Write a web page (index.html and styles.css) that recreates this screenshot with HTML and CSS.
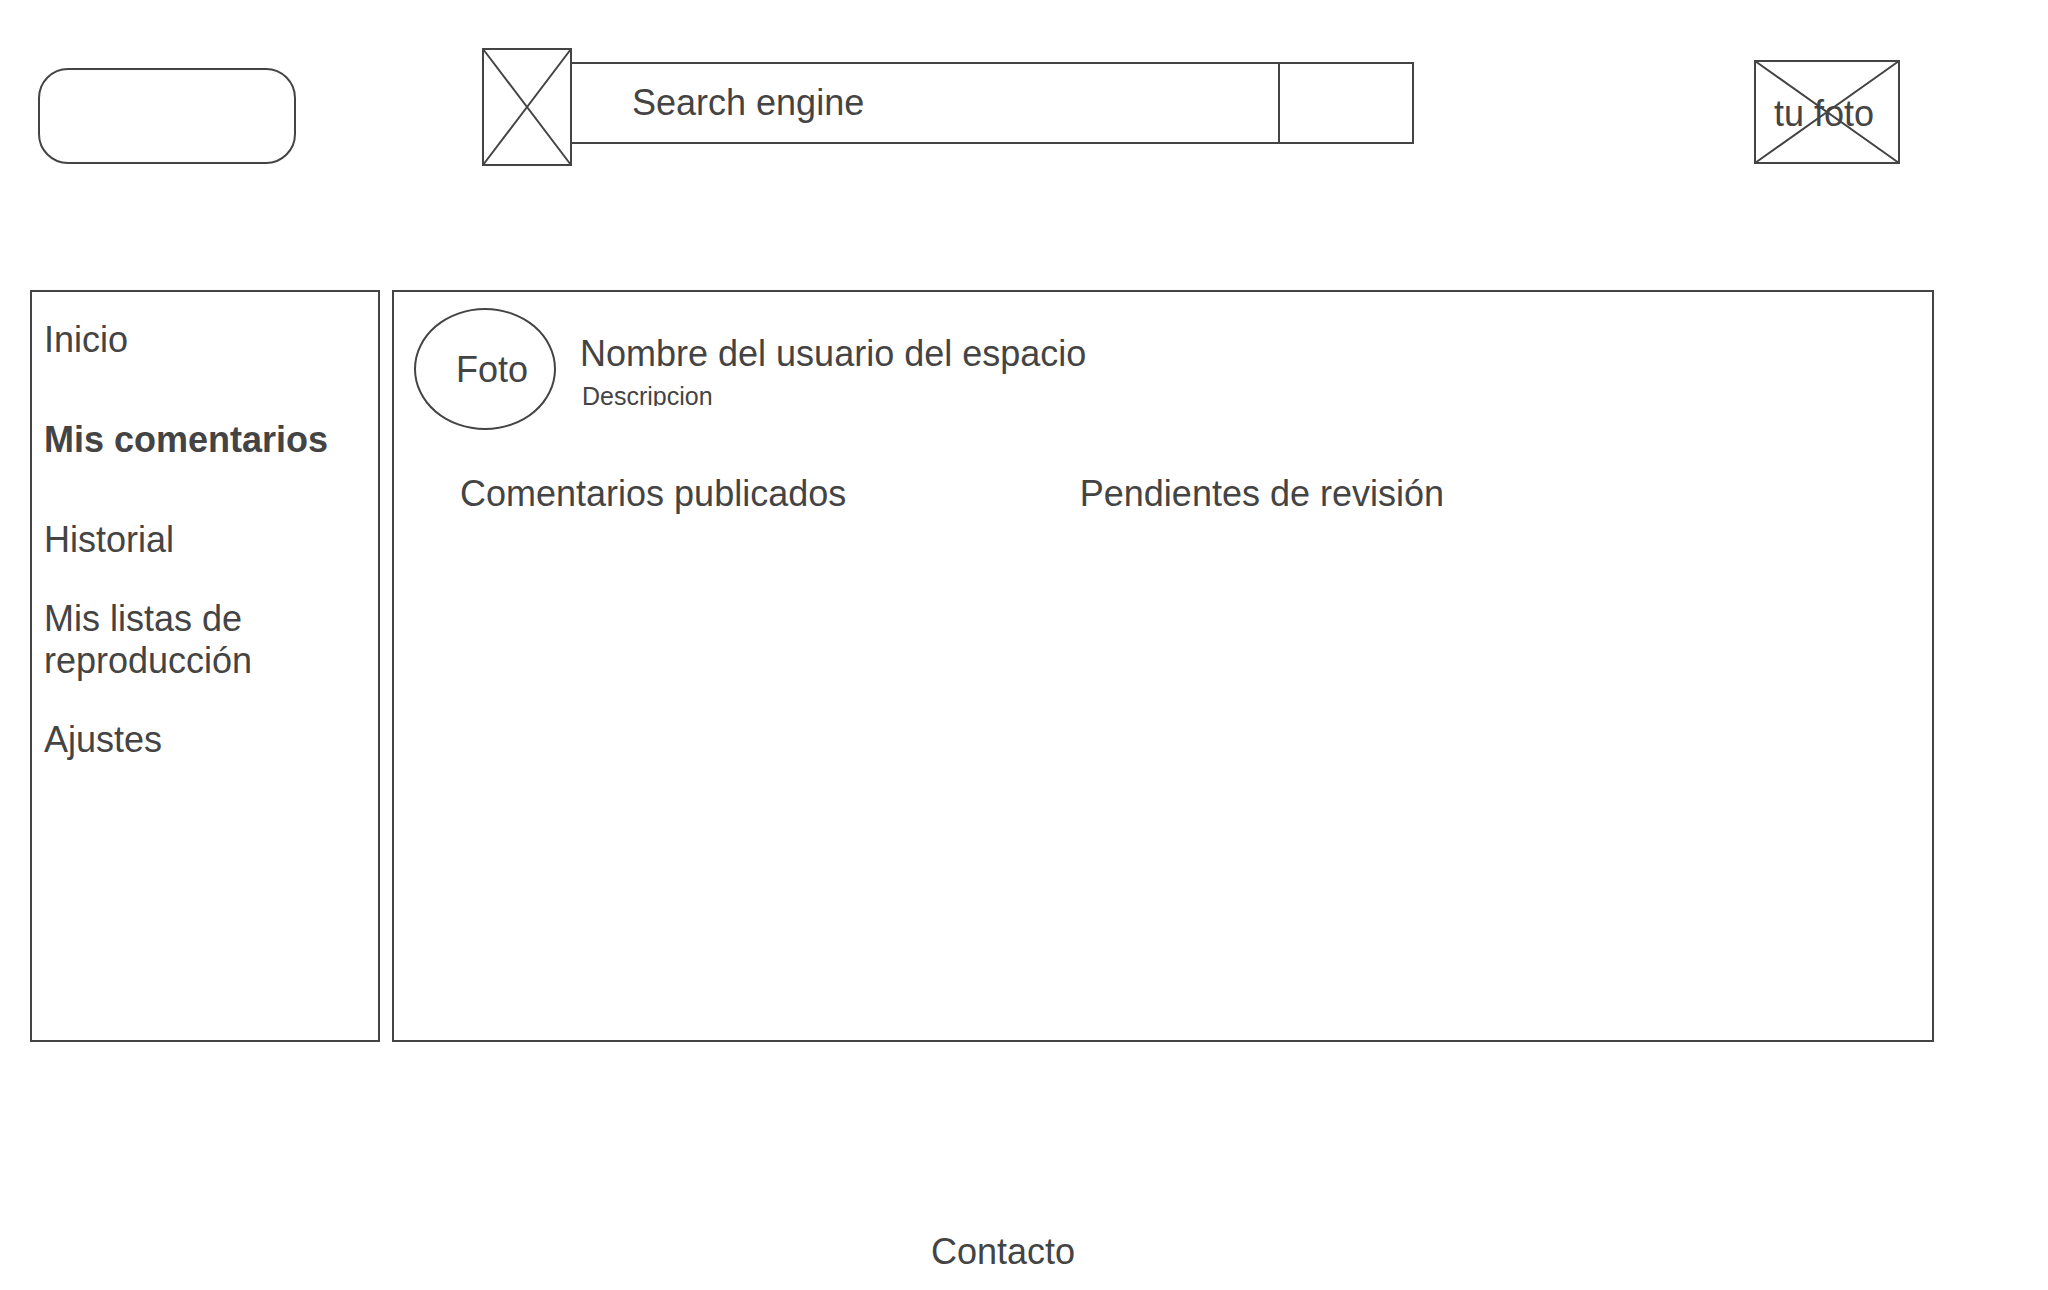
FILE: index.html
```html
<!DOCTYPE html>
<html lang="es">
<head>
<meta charset="utf-8">
<meta name="viewport" content="width=device-width, initial-scale=1">
<title>Mis comentarios</title>
<link rel="stylesheet" href="styles.css">
</head>
<body>
<header class="header">
  <a class="logo" href="#" aria-label="Inicio"></a>
  <form class="search" role="search">
    <svg class="search-image" viewBox="0 0 90 118" aria-hidden="true">
      <path d="M1 1H89V117H1ZM1 1L89 117M89 1L1 117"/>
    </svg>
    <input class="search-input" type="search" placeholder="Search engine" aria-label="Search engine">
    <button class="search-button" type="submit" aria-label="Buscar"></button>
  </form>
  <a class="account" href="#">
    <svg class="account-image" viewBox="0 0 146 104" aria-hidden="true">
      <path d="M1 1H145V103H1ZM1 1L145 103M145 1L1 103"/>
    </svg>
    <span class="account-label">tu foto</span>
  </a>
</header>
<div class="layout">
  <nav class="sidebar">
    <a class="nav-link" href="#">Inicio</a>
    <a class="nav-link nav-link-active" href="#" aria-current="page">Mis comentarios</a>
    <a class="nav-link" href="#">Historial</a>
    <a class="nav-link" href="#">Mis listas de reproducción</a>
    <a class="nav-link" href="#">Ajustes</a>
  </nav>
  <main class="content">
    <div class="profile">
      <div class="avatar">Foto</div>
      <div class="profile-text">
        <h1 class="title">Nombre del usuario del espacio</h1>
        <p class="description">Descripcion</p>
      </div>
    </div>
    <div class="columns">
      <h2 class="title">Comentarios publicados</h2>
      <h2 class="title">Pendientes de revisión</h2>
    </div>
  </main>
</div>
<footer class="footer"><a class="footer-link" href="#">Contacto</a></footer>
</body>
</html>
```
FILE: styles.css
```css
* {
  box-sizing: border-box;
}

body {
  margin: 0;
  background: #fff;
  color: #444;
  font: 36px/42px "Liberation Sans", Arial, sans-serif;
}

a {
  color: inherit;
  text-decoration: none;
}

svg {
  display: block;
  fill: none;
  stroke: #444;
  stroke-width: 2;
}

.header {
  display: flex;
  align-items: flex-start;
  padding: 48px 148px 0 38px;
}

.logo {
  flex: none;
  width: 258px;
  height: 96px;
  margin-top: 20px;
  border: 2px solid #444;
  border-radius: 30px;
}

.search {
  display: flex;
  flex: 1;
  align-items: flex-start;
  min-width: 0;
  margin: 0 340px 0 186px;
}

.search-image {
  flex: none;
  width: 90px;
  height: 118px;
}

.search-input,
.search-button {
  height: 82px;
  margin: 14px 0 0;
  border: 2px solid #444;
  border-radius: 0;
  background: none;
  color: inherit;
  font: inherit;
}

.search-input {
  flex: 1;
  min-width: 0;
  padding: 0 20px 0 60px;
  border-width: 2px 0;
  appearance: none;
}

.search-input::placeholder {
  color: inherit;
  opacity: 1;
}

.search-button {
  flex: none;
  width: 136px;
}

.account {
  display: grid;
  flex: none;
  margin-top: 12px;
}

.account-image,
.account-label {
  grid-area: 1 / 1;
}

.account-image {
  width: 146px;
  height: 104px;
}

.account-label {
  align-self: center;
  padding: 4px 0 0 20px;
}

.layout {
  display: flex;
  gap: 12px;
  min-height: 752px;
  margin: 124px 114px 0 30px;
}

.sidebar {
  display: grid;
  flex: none;
  grid-auto-rows: 96px;
  row-gap: 4px;
  align-content: start;
  align-items: center;
  width: 350px;
  padding: 0 12px;
  border: 2px solid #444;
}

.nav-link-active {
  font-weight: bold;
}

.content {
  flex: 1;
  border: 2px solid #444;
}

.profile {
  display: flex;
  gap: 24px;
  padding: 16px 20px 0;
}

.avatar {
  flex: none;
  width: 142px;
  height: 122px;
  padding: 39px 0 0 40px;
  border: 2px solid #444;
  border-radius: 50%;
}

.profile-text {
  padding-top: 25px;
}

.title {
  margin: 0;
  font-size: 36px;
  font-weight: normal;
}

/* The description is cut just below its baseline */
.description {
  height: 25px;
  margin: 6px 0 0;
  padding-left: 2px;
  overflow: hidden;
  font-size: 25px;
  line-height: 30px;
}

.columns {
  display: grid;
  grid-template-columns: 8fr 11fr;
  padding: 43px 0 0 66px;
}

.footer {
  padding: 189px 42px 16px 0;
  text-align: center;
}
```
